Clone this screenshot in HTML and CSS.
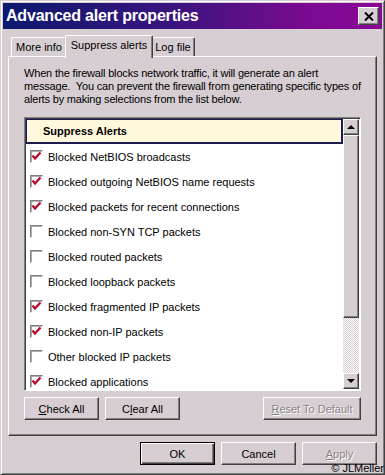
FILE: index.html
```html
<!DOCTYPE html>
<html lang="en">
<head>
    <meta charset="UTF-8">
    <meta name="viewport" content="width=device-width, initial-scale=1.0">
    <title>Advanced alert properties</title>
    <link rel="stylesheet" href="styles.css">
</head>
<body>
    <div class="window">
        <div class="titlebar">
            <span class="title">Advanced alert properties</span>
            <button class="close-btn">
                <svg width="10" height="9" viewBox="0 0 10 9"><path d="M1 0.5 L9 8.5 M9 0.5 L1 8.5" stroke="#000" stroke-width="2"/></svg>
            </button>
        </div>

        <div class="tabs">
            <div class="tab tab-info">More info</div>
            <div class="tab tab-active">Suppress alerts</div>
            <div class="tab tab-log">Log file</div>
        </div>

        <div class="panel">
            <p class="intro">When the firewall blocks network traffic, it will generate an alert<br>message.&nbsp; You can prevent the firewall from generating specific types of<br>alerts by making selections from the list below.</p>

            <div class="listbox">
                <div class="list">
                    <div class="list-head">Suppress Alerts</div>
                    <div class="row"><span class="check on"></span>Blocked NetBIOS broadcasts</div>
                    <div class="row"><span class="check on"></span>Blocked outgoing NetBIOS name requests</div>
                    <div class="row"><span class="check on"></span>Blocked packets for recent connections</div>
                    <div class="row"><span class="check"></span>Blocked non-SYN TCP packets</div>
                    <div class="row"><span class="check"></span>Blocked routed packets</div>
                    <div class="row"><span class="check"></span>Blocked loopback packets</div>
                    <div class="row"><span class="check on"></span>Blocked fragmented IP packets</div>
                    <div class="row"><span class="check on"></span>Blocked non-IP packets</div>
                    <div class="row"><span class="check"></span>Other blocked IP packets</div>
                    <div class="row"><span class="check on"></span>Blocked applications</div>
                </div>
                <div class="scrollbar">
                    <div class="sb-btn"><span class="arrow-up"></span></div>
                    <div class="sb-thumb"></div>
                    <div class="sb-track"></div>
                    <div class="sb-btn"><span class="arrow-down"></span></div>
                </div>
            </div>

            <div class="list-actions">
                <button class="btn"><u>C</u>heck All</button>
                <button class="btn">C<u>l</u>ear All</button>
                <button class="btn btn-wide disabled"><u>R</u>eset To Default</button>
            </div>
        </div>

        <div class="footer">
            <button class="btn btn-default">OK</button>
            <button class="btn">Cancel</button>
            <button class="btn disabled"><u>A</u>pply</button>
        </div>

        <div class="copyright">&copy; JLMeller</div>
    </div>

    <script>
        // draw the red tick into every checked box
        const tick = '<svg width="11" height="11" viewBox="0 0 11 11"><path d="M1.5 4.5 L4 7.5 L9.5 1.5" fill="none" stroke="#b4102e" stroke-width="2.4"/></svg>';
        document.querySelectorAll('.check.on').forEach(function(box) {
            box.innerHTML = tick;
        });
    </script>
</body>
</html>
```

FILE: styles.css
```css
* {
    box-sizing: border-box;
}
body {
    margin: 0;
    background-color: #d6ced2;
    font-family: "Liberation Sans", Arial, sans-serif;
    font-size: 11px;
    color: #000;
}
.window {
    position: relative;
    width: 385px;
    height: 475px;
    padding: 2px;
    background-color: #d6ced2;
    border: 1px solid;
    border-color: #d6ced2 #404040 #404040 #d6ced2;
    box-shadow: inset 1px 1px #fff, inset -1px -1px #808080;
}
.titlebar {
    height: 26px;
    display: flex;
    align-items: center;
    justify-content: space-between;
    padding: 0 3px 0 3px;
    background: linear-gradient(to right, #0c1a6e, #3a147e 45%, #7a0a90 80%, #8a0896);
}
.title {
    color: #fff;
    font-weight: bold;
    font-size: 16px;
    letter-spacing: -0.2px;
}
.close-btn {
    width: 21px;
    height: 18px;
    padding: 0;
    display: flex;
    align-items: center;
    justify-content: center;
    background-color: #d6ced2;
    border: 1px solid;
    border-color: #fff #404040 #404040 #fff;
    box-shadow: inset -1px -1px #808080;
}
.tabs {
    display: flex;
    align-items: flex-end;
    height: 27px;
    padding-left: 8px;
}
.tab {
    height: 19px;
    padding-top: 3px;
    text-align: center;
    background-color: #d6ced2;
    border: 1px solid;
    border-bottom: none;
    border-color: #fff #404040 #404040 #fff;
    border-radius: 2px 2px 0 0;
    box-shadow: inset -1px 0 #808080;
}
.tab-info {
    width: 56px;
}
.tab-log {
    width: 44px;
}
.tab-active {
    position: relative;
    z-index: 1;
    width: 88px;
    height: 23px;
    margin: 0 -2px -2px;
    padding-top: 3px;
}
.panel {
    height: 380px;
    margin: 0 5px;
    padding: 10px 15px 0;
    border: 1px solid;
    border-color: #fff #404040 #404040 #fff;
    box-shadow: inset -1px -1px #808080;
}
.intro {
    margin: 0;
    line-height: 13px;
    letter-spacing: -0.18px;
    white-space: nowrap;
}
.listbox {
    display: flex;
    height: 274px;
    margin-top: 11px;
    border: 1px solid;
    border-color: #808080 #fff #fff #808080;
    box-shadow: inset 1px 1px #404040;
    padding: 1px;
    background-color: #fff;
}
.list {
    flex: 1;
    overflow: hidden;
    background-color: #fff;
}
.list-head {
    height: 25px;
    padding: 5px 0 0 16px;
    font-weight: bold;
    background-color: #fff8dc;
    border: 2px solid #1c1c52;
    border-left-width: 1px;
    border-top-width: 1px;
}
.row {
    height: 25px;
    display: flex;
    align-items: center;
    padding-left: 4px;
}
.check {
    width: 13px;
    height: 13px;
    margin-right: 5px;
    display: flex;
    align-items: center;
    justify-content: center;
    background-color: #fff;
    border: 1px solid;
    border-color: #808080 #fff #fff #808080;
    box-shadow: inset 1px 1px #b0aaae;
}
.scrollbar {
    width: 16px;
    display: flex;
    flex-direction: column;
}
.sb-btn {
    height: 16px;
    display: flex;
    align-items: center;
    justify-content: center;
    background-color: #d6ced2;
    border: 1px solid;
    border-color: #fff #404040 #404040 #fff;
    box-shadow: inset -1px -1px #808080;
}
.arrow-up {
    border-left: 4px solid transparent;
    border-right: 4px solid transparent;
    border-bottom: 4px solid #000;
}
.arrow-down {
    border-left: 4px solid transparent;
    border-right: 4px solid transparent;
    border-top: 4px solid #000;
}
.sb-thumb {
    height: 183px;
    background-color: #d6ced2;
    border: 1px solid;
    border-color: #fff #404040 #404040 #fff;
    box-shadow: inset -1px -1px #808080;
}
.sb-track {
    flex: 1;
    background-color: #fff;
    background-image: repeating-conic-gradient(#d6ced2 0 25%, #fff 0 50%);
    background-size: 2px 2px;
}
.list-actions {
    display: flex;
    gap: 6px;
    margin-top: 6px;
}
.btn {
    width: 75px;
    height: 23px;
    padding: 0;
    font-family: "Liberation Sans", Arial, sans-serif;
    font-size: 11px;
    color: #000;
    background-color: #d6ced2;
    border: 1px solid;
    border-color: #fff #404040 #404040 #fff;
    box-shadow: inset -1px -1px #808080;
}
.btn-wide {
    width: 98px;
    margin-left: auto;
}
.disabled {
    color: #8a8488;
    text-shadow: 1px 1px #fff;
}
.btn-default {
    border: 1px solid #000;
    box-shadow: inset 1px 1px #fff, inset -1px -1px #404040, inset -2px -2px #808080;
}
.footer {
    display: flex;
    justify-content: flex-end;
    gap: 6px;
    margin-top: 6px;
    padding-right: 5px;
}
.copyright {
    position: absolute;
    right: 0;
    bottom: 0;
    font-size: 11px;
    line-height: 11px;
}
```
